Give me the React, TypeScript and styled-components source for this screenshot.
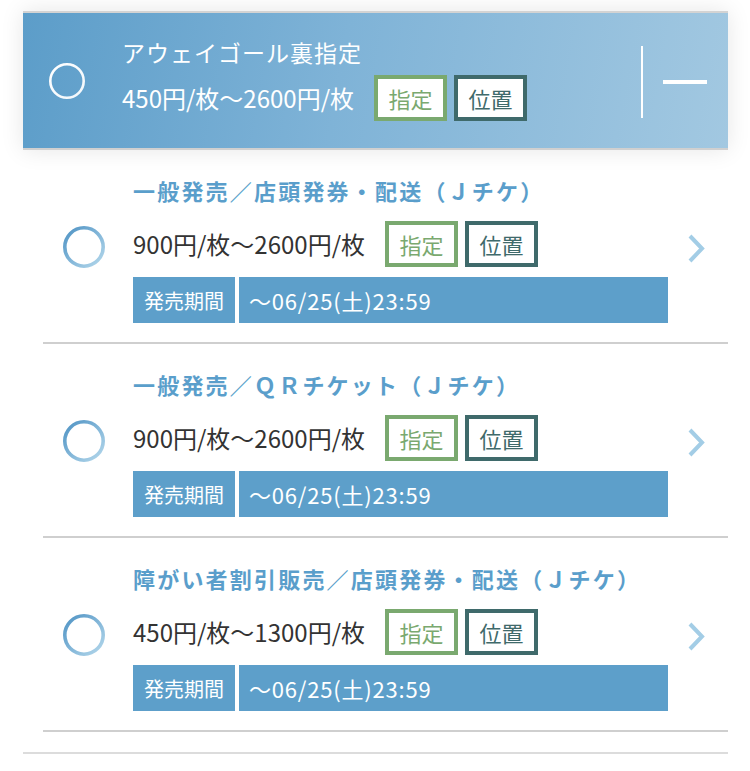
import styled, { createGlobalStyle } from 'styled-components';

const GlobalStyle = createGlobalStyle`
  html, body {
    margin: 0;
    padding: 0;
    background: #ffffff;
  }
  body {
    font-family: 'Noto Sans CJK JP', 'Noto Sans', sans-serif;
  }
`;

type Ticket = {
  title: string;
  price: string;
  period: string;
};

const tickets: Ticket[] = [
  { title: '一般発売／店頭発券・配送（Ｊチケ）', price: '900円/枚〜2600円/枚', period: '〜06/25(土)23:59' },
  { title: '一般発売／ＱＲチケット（Ｊチケ）', price: '900円/枚〜2600円/枚', period: '〜06/25(土)23:59' },
  { title: '障がい者割引販売／店頭発券・配送（Ｊチケ）', price: '450円/枚〜1300円/枚', period: '〜06/25(土)23:59' },
];

const Ring = ({ size, stroke, light }: { size: number; stroke: number; light?: boolean }) => {
  const r = (size - stroke) / 2;
  const id = light ? 'ringWhite' : 'ringBlue';
  return (
    <svg width={size} height={size} viewBox={`0 0 ${size} ${size}`}>
      <defs>
        <linearGradient id={id} x1="0" y1="0" x2="1" y2="1">
          <stop offset="0" stopColor={light ? '#ffffff' : '#4f93c4'} />
          <stop offset="1" stopColor={light ? '#f2f7fb' : '#b4d8ec'} />
        </linearGradient>
      </defs>
      <circle cx={size / 2} cy={size / 2} r={r} fill="none" stroke={`url(#${id})`} strokeWidth={stroke} />
    </svg>
  );
};

export default function App() {
  return (
    <Page>
      <GlobalStyle />
      <Header>
        <HeaderRing>
          <Ring size={36} stroke={2.6} light />
        </HeaderRing>
        <HeaderBody>
          <HeaderTitle>アウェイゴール裏指定</HeaderTitle>
          <PriceRow>
            <Price $light>450円/枚〜2600円/枚</Price>
            <Badges>
              <Badge $tone="green">指定</Badge>
              <Badge $tone="teal">位置</Badge>
            </Badges>
          </PriceRow>
        </HeaderBody>
        <Divider />
        <Collapse>
          <Minus />
        </Collapse>
      </Header>

      <List>
        {tickets.map(t => (
          <Item key={t.title}>
            <RingCell>
              <Ring size={42} stroke={3.6} />
            </RingCell>
            <ItemBody>
              <ItemTitle>{t.title}</ItemTitle>
              <PriceRow>
                <Price>{t.price}</Price>
                <Badges>
                  <Badge $tone="green">指定</Badge>
                  <Badge $tone="teal">位置</Badge>
                </Badges>
              </PriceRow>
              <Period>
                <PeriodLabel>発売期間</PeriodLabel>
                <PeriodValue>{t.period}</PeriodValue>
              </Period>
            </ItemBody>
            <ChevronCell>
              <svg width="19" height="31" viewBox="0 0 19 31">
                <polyline points="3,3 15,15.5 3,28" fill="none" stroke="#a3cde6" strokeWidth="4" />
              </svg>
            </ChevronCell>
          </Item>
        ))}
      </List>
    </Page>
  );
}

const Page = styled.div`
  width: 750px;
  padding: 11px 22px 0 23px;
  box-sizing: border-box;
`;

const Header = styled.div`
  position: relative;
  z-index: 2;
  display: flex;
  align-items: center;
  height: 139px;
  box-sizing: border-box;
  border-top: 2px solid #d3d3d3;
  border-bottom: 2px solid #d0d0d0;
  background: linear-gradient(100deg, #5c9dc9 0%, #7fb3d7 45%, #a2c8e1 100%);
  box-shadow: 0 0 22px rgba(0, 0, 0, 0.1);
`;

const HeaderRing = styled.div`
  display: flex;
  padding-left: 26px;
  margin-right: 37px;
`;

const HeaderBody = styled.div`
  flex: 1;
  display: flex;
  flex-direction: column;
  gap: 8px;
  padding-bottom: 4px;
`;

const HeaderTitle = styled.div`
  color: #ffffff;
  font-size: 23px;
  line-height: 30px;
  letter-spacing: 1px;
`;

const PriceRow = styled.div`
  display: flex;
  align-items: center;
  height: 46px;
`;

const Price = styled.div<{ $light?: boolean }>`
  color: ${p => (p.$light ? '#ffffff' : '#333333')};
  font-size: 24px;
  line-height: 30px;
  margin-right: 20px;
  white-space: nowrap;
`;

const Badges = styled.div`
  display: flex;
  gap: 7px;
`;

const Badge = styled.div<{ $tone: 'green' | 'teal' }>`
  width: 73px;
  height: 46px;
  box-sizing: border-box;
  display: flex;
  align-items: center;
  justify-content: center;
  background: #ffffff;
  border: 4px solid ${p => (p.$tone === 'green' ? '#7aa96f' : '#3f6a6b')};
  color: ${p => (p.$tone === 'green' ? '#7aa96f' : '#3f6a6b')};
  font-size: 22px;
`;

const Divider = styled.div`
  width: 2px;
  height: 72px;
  background: #ffffff;
  margin: 2px 20px 0 0;
`;

const Collapse = styled.div`
  width: 65px;
  display: flex;
  align-items: center;
`;

const Minus = styled.div`
  width: 44px;
  height: 4px;
  background: #ffffff;
  margin-top: 2px;
`;

const List = styled.div`
  padding-bottom: 20px;
  border-bottom: 2px solid #dcdcdc;
`;

const Item = styled.div`
  margin-left: 20px;
  display: grid;
  grid-template-columns: 90px 535px 1fr;
  border-bottom: 2px solid #cfcfcf;
`;

const RingCell = styled.div`
  display: flex;
  align-items: center;
  padding-left: 20px;
  padding-top: 2px;
`;

const ItemBody = styled.div`
  display: flex;
  flex-direction: column;
  padding: 25px 0 19px;
`;

const ItemTitle = styled.div`
  color: #5a9ecb;
  font-size: 22px;
  font-weight: 700;
  line-height: 30px;
  letter-spacing: 2.2px;
  margin-bottom: 16px;
  white-space: nowrap;
`;

const Period = styled.div`
  display: flex;
  gap: 4px;
  height: 46px;
  margin-top: 10px;
`;

const PeriodLabel = styled.div`
  background: #5d9fca;
  color: #ffffff;
  font-size: 20px;
  display: flex;
  align-items: center;
  justify-content: center;
  width: 102px;
`;

const PeriodValue = styled.div`
  flex: 1;
  background: #5d9fca;
  color: #ffffff;
  font-size: 22px;
  letter-spacing: 0.8px;
  display: flex;
  align-items: center;
  padding-left: 10px;
`;

const ChevronCell = styled.div`
  display: flex;
  align-items: center;
  padding-left: 19px;
  padding-top: 4px;
`;
